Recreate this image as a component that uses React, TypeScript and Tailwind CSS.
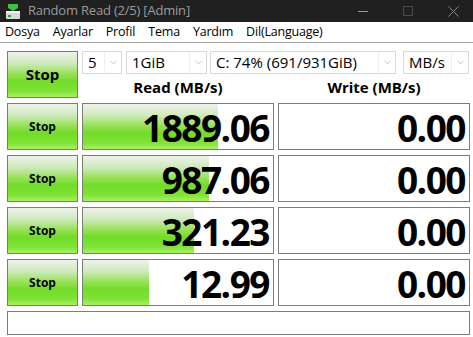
import { ChevronDown } from "lucide-react";

const rows = [
  { read: "1889.06", bar: 135 },
  { read: "987.06", bar: 126 },
  { read: "321.23", bar: 111 },
  { read: "12.99", bar: 66 },
];

const green =
  "bg-[linear-gradient(to_bottom,#eef3ea_0%,#cfe9bd_25%,#93e150_50%,#72dc2a_65%,#7ee234_85%,#a6f062_100%)]";

function Combo({ label, width }: { label: string; width: string }) {
  return (
    <div className={`${width} h-[23px] flex items-center border border-[#d9d9d9] bg-white`}>
      <div className="flex-1 min-w-0 pl-[5px] text-[15px] leading-[21px] text-black whitespace-nowrap">{label}</div>
      <div className="w-[17px] h-full shrink-0 flex items-center justify-center border-l border-[#f0f0f0]">
        <ChevronDown className="w-[11px] h-[11px] text-[#a8a8a8]" strokeWidth={1.5} />
      </div>
    </div>
  );
}

function StopButton({ big }: { big?: boolean }) {
  return (
    <div
      className={`${green} border border-[#7c7c7c] flex items-center justify-center font-bold text-black leading-normal ${
        big ? "text-[15px]" : "text-[12px]"
      }`}
    >
      Stop
    </div>
  );
}

function Cell({ value, bar }: { value: string; bar?: number }) {
  return (
    <div className="relative border border-[#7c7c7c] bg-white">
      {bar !== undefined && (
        <div className={`absolute left-0 top-0 bottom-0 ${green}`} style={{ width: bar }} />
      )}
      <div className="relative h-full flex items-center justify-end pr-[4px] pt-[3px] text-[37px] font-bold leading-[40px] tracking-[-1.5px] text-black">
        {value}
      </div>
    </div>
  );
}

export default function App() {
  return (
    <div className="w-[473px] h-[337px] bg-white overflow-hidden font-['Open_Sans','Noto_Sans',sans-serif]">
      <div className="h-[22px] bg-[#202020] flex items-center">
        <svg className="ml-[6px] w-[14px] h-[15px]" viewBox="0 0 14 15">
          <path d="M2 0h10v4L7 7 2 4z" fill="#3bc43b" />
          <rect x="0" y="7" width="14" height="8" rx="1" fill="#d8d8d8" />
          <rect x="0" y="7" width="14" height="2" fill="#f2f2f2" />
          <rect x="2" y="11" width="3" height="2" fill="#27a827" />
        </svg>
        <span className="ml-[8px] text-[13px] leading-normal text-[#9c9c9c] tracking-[-0.2px]">Random Read (2/5) [Admin]</span>
        <div className="ml-auto flex items-center h-full">
          <div className="w-[10px] h-px bg-[#9a9a9a] mr-[35px]" />
          <div className="w-[10px] h-[10px] border border-[#4a4a4a] mr-[35px]" />
          <svg className="w-[11px] h-[11px] mr-[14px]" viewBox="0 0 11 11">
            <path d="M0.5 0.5l10 10M10.5 0.5l-10 10" stroke="#8a8a8a" strokeWidth="1" />
          </svg>
        </div>
      </div>
      <div className="h-[21px] border-b border-[#a0a0a0] flex items-center gap-[13px] pl-[5px] text-[12.5px] leading-normal text-black tracking-[-0.2px]">
        <span>Dosya</span>
        <span>Ayarlar</span>
        <span>Profil</span>
        <span>Tema</span>
        <span>Yardım</span>
        <span>Dil(Language)</span>
      </div>
      <div className="pl-[7px] pt-[8px] grid grid-cols-[71px_192px_192px] gap-x-[4px] gap-y-[5px] grid-rows-[47px_47px_47px_47px_47px_24px]">
        <StopButton big />
        <div className="col-span-2 flex flex-col">
          <div className="flex items-center h-[23px]">
            <Combo label="5" width="w-[40px]" />
            <div className="ml-[4px]">
              <Combo label="1GiB" width="w-[81px]" />
            </div>
            <div className="ml-[3px]">
              <Combo label="C: 74% (691/931GiB)" width="w-[186px]" />
            </div>
            <div className="ml-[7px]">
              <Combo label="MB/s" width="w-[66px]" />
            </div>
          </div>
          <div className="flex-1 grid grid-cols-[192px_192px] gap-x-[4px] items-center text-[15px] leading-normal font-bold text-black text-center pt-[2px]">
            <div>Read (MB/s)</div>
            <div>Write (MB/s)</div>
          </div>
        </div>
        {rows.map((r) => (
          <div key={r.read} className="contents">
            <StopButton />
            <Cell value={r.read} bar={r.bar} />
            <Cell value="0.00" />
          </div>
        ))}
        <div className="col-span-3 border border-[#7c7c7c]" />
      </div>
    </div>
  );
}
